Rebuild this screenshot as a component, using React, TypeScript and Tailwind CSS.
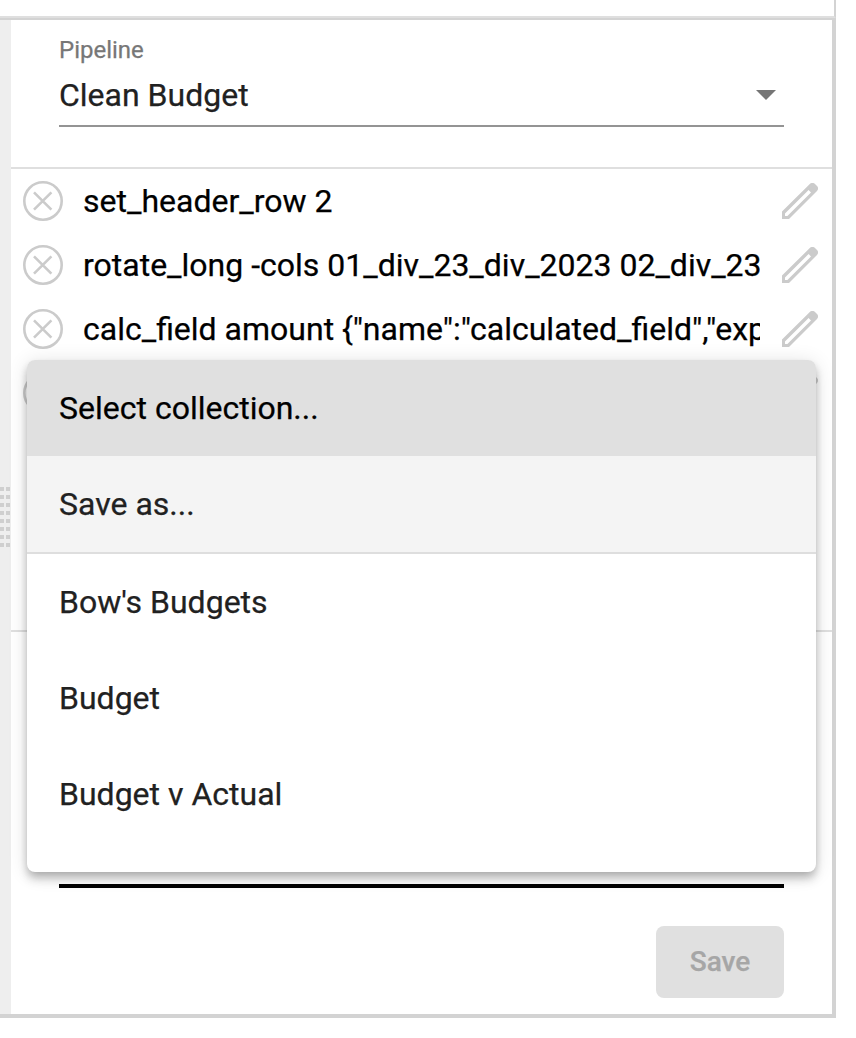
const steps = [
  'set_header_row 2',
  'rotate_long -cols 01_div_23_div_2023 02_div_23',
  'calc_field amount {"name":"calculated_field","exp',
  '',
];

const collections = ["Bow's Budgets", 'Budget', 'Budget v Actual'];

function RemoveIcon() {
  return (
    <svg className="block size-10 shrink-0" viewBox="0 0 40 40" fill="none" stroke="#cbcbcb">
      <circle cx="20" cy="20" r="18.7" strokeWidth="2.6" />
      <path d="M11 11.3 28.4 28.7M28.4 11.3 11 28.7" strokeWidth="2.6" />
    </svg>
  );
}

function PencilIcon() {
  return (
    <svg className="block size-9 shrink-0" viewBox="0 0 36 36" fill="#cbcbcb">
      <path
        fillRule="evenodd"
        d="M0 36V28.6L27.8 1Q30.4-1.2 33 1L35 3Q37.2 5.4 35 7.9L7 36ZM3 33H5.4L29 9.4L26.6 7L3 30.6Z"
      />
    </svg>
  );
}

function StepRow({ text }: { text: string }) {
  return (
    <li className="flex h-16 items-center">
      <RemoveIcon />
      <span className="ml-5 w-[677px] shrink-0 overflow-hidden text-[32px] leading-[48px] whitespace-nowrap text-black">
        {text}
      </span>
      <span className="ml-[22px]">
        <PencilIcon />
      </span>
    </li>
  );
}

function Handle() {
  return (
    <div className="grid w-[10px] grid-cols-[4px_4px] gap-x-[2px] gap-y-1">
      {Array.from({ length: 16 }, (_, i) => (
        <span key={i} className="h-1 bg-[#cfcfcf]" />
      ))}
    </div>
  );
}

function CollectionMenu() {
  return (
    <div className="absolute top-[360px] left-[27px] h-[512px] w-[789px] overflow-hidden rounded-lg bg-white text-[32px] leading-[96px] text-[#212121] shadow-[0_4px_8px_-2px_rgba(0,0,0,0.2),0_8px_10px_0_rgba(0,0,0,0.14),0_2px_20px_0_rgba(0,0,0,0.12)]">
      <div className="h-24 bg-[#e0e0e0] px-8 text-black">Select collection...</div>
      <div className="h-[98px] border-b-2 border-[#dedede] bg-[#f4f4f4] px-8">Save as...</div>
      {collections.map((name) => (
        <div key={name} className="h-24 px-8">
          {name}
        </div>
      ))}
    </div>
  );
}

export default function App() {
  return (
    <div className="relative h-[1038px] w-[856px] overflow-hidden bg-white font-[Roboto,sans-serif] [-webkit-text-stroke:0.25px]">
      <div className="h-[18px] w-[836px] border-r-2 border-b-2 border-r-[#d3d3d3] border-b-[#dfdfdf]" />
      <div className="flex h-[1000px] w-[836px] border-t-2 border-r-4 border-b-4 border-[#d3d3d3]">
        <div className="flex w-[11px] shrink-0 flex-col bg-[#eee] pt-[467px]">
          <Handle />
        </div>
        <main className="flex flex-1 flex-col">
          <section className="h-[149px] border-b-2 border-[#dfdfdf] pr-12 pl-12">
            <div className="pt-4 text-[24px] leading-[28px] text-[#777]">Pipeline</div>
            <div className="mt-[10px] flex h-[53px] items-start justify-between border-b-2 border-[#949494] pr-2">
              <span className="text-[32px] leading-[42px] text-[#212121]">Clean Budget</span>
              <svg className="mt-4 h-[10px] w-5" viewBox="0 0 20 10" fill="#757575">
                <path d="M0 0h20L10 10z" />
              </svg>
            </div>
          </section>
          <ul className="h-[463px] border-b-2 border-[#dfdfdf] pl-3">
            {steps.map((step, i) => (
              <StepRow key={i} text={step} />
            ))}
          </ul>
          <section className="flex flex-1 flex-col px-12">
            <div className="h-[256px] border-b-4 border-black" />
            <button className="mt-[38px] h-[72px] w-32 self-end rounded-lg bg-[#e0e0e0] text-[28px] font-medium text-[#a6a6a6]">
              Save
            </button>
          </section>
        </main>
      </div>
      <CollectionMenu />
    </div>
  );
}
